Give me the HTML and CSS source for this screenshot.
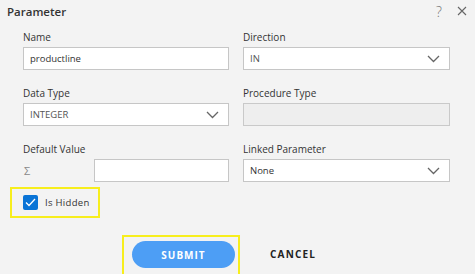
FILE: index.html
```html
<!DOCTYPE html>
<html lang="en">
<head>
<meta charset="utf-8"/>
<title>Parameter</title>
<link rel="stylesheet" href="styles.css">
</head>
<body>
<div class="dialog">
  <div class="dialog-head">
    <span class="dialog-title">Parameter</span>
    <span class="head-tools">
      <span class="help">?</span>
      <svg class="close" width="10" height="10" viewBox="0 0 10 10"><path d="M1 1L9 9M9 1L1 9" stroke="#666" stroke-width="1.1" fill="none"/></svg>
    </span>
  </div>

  <div class="form-grid">
    <div class="field">
      <label>Name</label>
      <div class="box">productline</div>
    </div>
    <div class="field">
      <label>Direction</label>
      <div class="box select"><span class="muted">IN</span><svg class="chev" width="13" height="8" viewBox="0 0 13 8"><path d="M1 1L6.5 6.5L12 1" stroke="#666" stroke-width="1.3" fill="none"/></svg></div>
    </div>
    <div class="field">
      <label>Data Type</label>
      <div class="box select"><span class="muted">INTEGER</span><svg class="chev" width="13" height="8" viewBox="0 0 13 8"><path d="M1 1L6.5 6.5L12 1" stroke="#666" stroke-width="1.3" fill="none"/></svg></div>
    </div>
    <div class="field">
      <label>Procedure Type</label>
      <div class="box disabled"></div>
    </div>
    <div class="field">
      <label>Default Value</label>
      <div class="value-row">
        <span class="sigma">Σ</span>
        <div class="box grow"></div>
      </div>
    </div>
    <div class="field">
      <label>Linked Parameter</label>
      <div class="box select"><span>None</span><svg class="chev" width="13" height="8" viewBox="0 0 13 8"><path d="M1 1L6.5 6.5L12 1" stroke="#666" stroke-width="1.3" fill="none"/></svg></div>
    </div>
  </div>

  <div class="check-wrap">
    <span class="check"><svg width="11" height="9" viewBox="0 0 11 9"><path d="M1 4.5L4 7.5L10 1" stroke="#fff" stroke-width="1.3" fill="none"/></svg></span>
    <span class="check-label">Is Hidden</span>
  </div>

  <div class="actions">
    <div class="hl"><button class="btn-submit">SUBMIT</button></div>
    <button class="btn-cancel">CANCEL</button>
  </div>
</div>
</body>
</html>
```

FILE: styles.css
```css
body {
  margin: 0;
  background: #f3f3f3;
  font-family: 'Open Sans', 'Noto Sans', sans-serif;
  color: #333;
}
.dialog {
  width: 475px;
  height: 274px;
  overflow: hidden;
}
.dialog-head {
  display: flex;
  justify-content: space-between;
  align-items: center;
  height: 22px;
  padding: 0 7px 0 7px;
}
.dialog-title {
  font-size: 11.5px;
  font-weight: 600;
  color: #333;
}
.head-tools {
  display: flex;
  align-items: center;
  gap: 15px;
}
.help {
  font-size: 14px;
  color: #777;
  font-weight: 300;
}
.close {
  margin-right: 1px;
}
.form-grid {
  display: grid;
  grid-template-columns: 206px 207px;
  column-gap: 14px;
  row-gap: 16px;
  padding: 8px 0 0 23px;
}
.field label {
  display: block;
  font-size: 10px;
  line-height: 14px;
  margin-bottom: 3px;
  color: #333;
}
.box {
  height: 23px;
  box-sizing: border-box;
  border: 1px solid #c6c6c6;
  background: #fff;
  font-size: 9.5px;
  line-height: 21px;
  padding: 0 6px;
  color: #333;
}
.box.select {
  display: flex;
  justify-content: space-between;
  align-items: center;
  padding-right: 9px;
}
.muted {
  color: #555;
}
.box.disabled {
  background: #eeeeee;
  border-color: #c9c9c9;
}
.value-row {
  display: flex;
  align-items: center;
}
.sigma {
  width: 70px;
  font-size: 11px;
  color: #888;
  padding-left: 1px;
}
.grow {
  flex: 1;
}
.check-wrap {
  display: inline-flex;
  align-items: center;
  gap: 7px;
  margin: 5px 0 0 10px;
  padding: 0 8px 0 11px;
  height: 27px;
  border: 2px solid #f7ee1c;
}
.check {
  width: 15px;
  height: 15px;
  background: #0a74d6;
  border-radius: 2px;
  display: flex;
  align-items: center;
  justify-content: center;
}
.check-label {
  font-size: 9.5px;
  color: #333;
  letter-spacing: 0.3px;
}
.actions {
  display: flex;
  align-items: center;
  margin: 17px 0 0 122px;
  gap: 30px;
}
.hl {
  border: 2px solid #f7ee1c;
  padding: 4px 3px 6px 8px;
}
.btn-submit {
  width: 103px;
  height: 27px;
  border: none;
  border-radius: 14px;
  background: #4d9ef5;
  color: #fff;
  font-family: inherit;
  font-weight: 700;
  font-size: 10px;
  letter-spacing: 1px;
  display: block;
}
.btn-cancel {
  border: none;
  background: none;
  padding: 0;
  font-family: inherit;
  font-weight: 700;
  font-size: 10px;
  letter-spacing: 1.2px;
  color: #222;
  margin-top: -4px;
}
```
